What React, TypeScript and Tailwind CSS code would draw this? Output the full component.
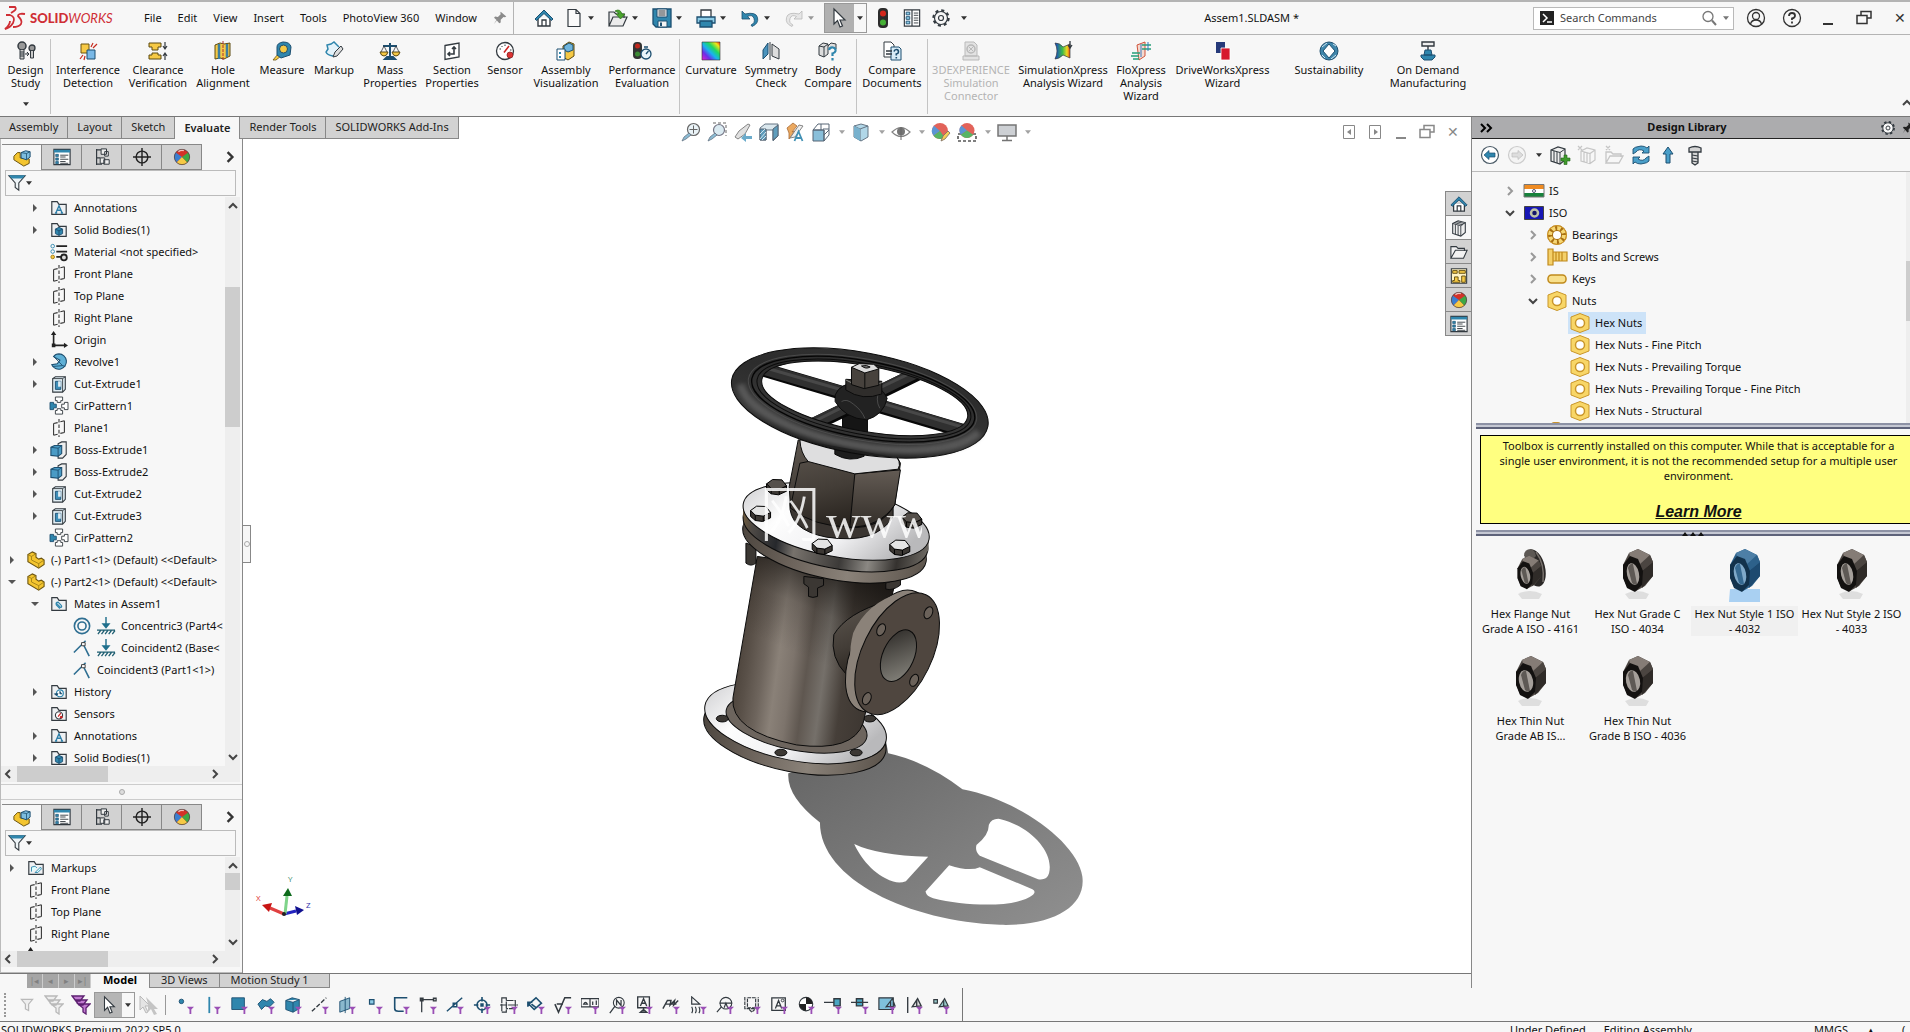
import { useState } from 'react'
import type { ReactNode } from 'react'
import { clsx } from 'clsx'

const K = '#333a40'
const B = '#2f86ad'
const L = '#8ccbe6'
const D = '#1d4f70'
const Y = '#f6c945'
const G = '#b9b9b9'

const folderBase = (
  <path d="M2 17V3h6l2 3h8v11z" fill="#eef0f2" stroke={K} strokeWidth="1.3" />
)

const icons: Record<string, ReactNode> = {
  home: (
    <>
      <path d="M4 10v8h12v-8" fill="#fff" stroke={K} strokeWidth="1.4" />
      <path d="M8 18v-6h4v6" fill="none" stroke={K} strokeWidth="1.3" />
      <path d="M1 11 10 2l9 9-1.5 1.5L10 5.500 2.500 12.500z" fill={B} stroke={D} strokeWidth="1" />
    </>
  ),
  page: (
    <path d="M4 1.500h8l4 4V18.500H4zM12 1.500v4h4" fill="#fafafa" stroke={K} strokeWidth="1.2" />
  ),
  open: (
    <>
      <path d="M1 18V4h5l2 2h8v4M1 18l4-9h14l-4 9z" fill="#ececec" stroke={K} strokeWidth="1.2" />
      <path d="M7 3q5-3 7 3h3l-4.500 5L8 6h3Q10 4 7 3z" fill="#4aa52e" stroke="#2b6e18" strokeWidth=".7" />
    </>
  ),
  save: (
    <>
      <path d="M1 1h18v18H4l-3-3z" fill={B} stroke={D} strokeWidth="1.3" />
      <path d="M5 1h10v8H5zM6 13h9v6H6z" fill="#f4f4f4" stroke={D} />
      <path d="M6.500 3h7M6.500 5h7M6.500 7h7" stroke={K} />
      <path d="M8 14.500h2V18H8z" fill={D} />
    </>
  ),
  print: (
    <>
      <path d="M5 9V2h10v7" fill="#fff" stroke={K} strokeWidth="1.3" />
      <path d="M1 9h18v6H1z" fill={L} stroke={D} strokeWidth="1.3" />
      <path d="M4 13h12v6H4z" fill={B} stroke={D} strokeWidth="1.3" />
    </>
  ),
  undo: (
    <path
      d="M2 3v8h8L7.500 8.500q5-2.500 6.500 2t-3 6.500l1 1.500q7-3 5.500-9T5 6z"
      fill={B}
      stroke={D}
      strokeWidth=".8"
    />
  ),
  redo: (
    <path
      d="M18 3v8h-8l2.500-2.500q-5-2.500-6.500 2t3 6.500l-1 1.500q-7-3-5.500-9T15 6z"
      fill="#e6e6e6"
      stroke={G}
      strokeWidth=".8"
    />
  ),
  pointer: (
    <path d="M5 1v15l3.500-3.500L11 19l2.500-1-2.500-6h5z" fill="#fff" stroke={K} strokeWidth="1.2" />
  ),
  pointerOff: (
    <>
      <path d="M1 1v14l3-3 3 6 2-1-3-6h5z" fill="#e4e4e4" stroke={G} />
      <path d="M7 2l12 12h-4l3 5-3 1-3-6-3 3V9z" fill="#c4c4c4" />
    </>
  ),
  traffic: (
    <>
      <rect x="5" y="0" width="10" height="20" rx="4" fill="#2c2c2c" />
      <circle cx="10" cy="5.500" r="3" fill="#d4271c" />
      <circle cx="10" cy="14.500" r="3" fill="#45b035" />
    </>
  ),
  list: (
    <>
      <path d="M1 1.500h18v17H1z" fill="#fff" stroke={K} strokeWidth="1.3" />
      <path d="M1 2h18v3H1z" fill={B} />
      <path d="M3 7h3v2.500H3zM3 11h3v2.500H3zM3 15h3v2.500H3z" fill={B} stroke={D} strokeWidth=".7" />
      <path d="M8 8h9M8 10h6M8 12.500h9M8 15h6M8 17h9" stroke={K} />
    </>
  ),
  options: (
    <>
      <path d="M1.500 1h17v18h-17zM10 1v18" fill="#fff" stroke={K} strokeWidth="1.3" />
      <path d="M3.500 3.500h4v3h-4zM3.500 8.500h4v3h-4zM3.500 13.500h4v3h-4z" fill={L} stroke={D} />
      <path d="M12 4.500h5M12 7h5M12 10h5M12 12.500h5M12 15.500h5" stroke={K} />
    </>
  ),
  gear: (
    <>
      <circle cx="10" cy="10" r="7.500" fill="none" stroke={K} strokeWidth="2.400" strokeDasharray="3 2.890" />
      <circle cx="10" cy="10" r="6.500" fill="#f7f7f7" stroke={K} strokeWidth="1.200" />
      <circle cx="10" cy="10" r="2.500" fill="none" stroke={K} strokeWidth="1.200" />
    </>
  ),
  pin: (
    <path d="M11 1l8 7-2 1-2-.5-4 4 0 4-2 1-3.500-4L1 19l4-6-3.500-3.500L3 8l4 .5 4-4-.5-2z" fill="currentColor" />
  ),
  study: (
    <>
      <circle cx="6" cy="5" r="4" fill="#999" stroke={K} strokeWidth="1.5" />
      <path d="M4 9v9h4V9M4 11h4M4 13h4M4 15h4" fill="#ccc" stroke={K} />
      <circle cx="16" cy="7" r="3" fill="#999" stroke={K} strokeWidth="1.3" />
      <path d="M14.500 10v7h3v-7M9 13h4l-2-2m2 2-2 2" fill="#ccc" stroke={K} />
    </>
  ),
  interference: (
    <>
      <path d="M3 3h8v9H3z" fill={Y} stroke="#6b5410" />
      <path d="M9 9h8v9H9z" fill="#79b8e6" stroke={D} />
      <path d="m13 6 2-4m0 5 4-4M5 14l-3 4m5-3-1 4" stroke="#c62c20" strokeWidth="1.2" />
    </>
  ),
  clearance: (
    <>
      <path d="M1 2h12v4h-3v3H4V6H1zM1 18h12v-4h-3v-2H4v2H1z" fill={Y} stroke="#5c4a10" />
      <path d="M17 1v6m-2-2 2 3 2-3M17 19v-6m-2 2 2-3 2 3" stroke={K} fill="none" strokeWidth="1.2" />
    </>
  ),
  hole: (
    <>
      <path d="M2 4l5-2 4 1 6-1v13l-6 3-4-1-5 1z" fill={Y} stroke="#5c4a10" />
      <path d="M6 3v15M14 3v13" stroke="#3c7f9f" strokeWidth="2.500" />
      <path d="M10 0v20" stroke="#a33" strokeDasharray="3 1" />
    </>
  ),
  measure: (
    <>
      <path d="M1 19l5-6 3 2-5 4z" fill={Y} stroke="#6b5410" strokeWidth=".8" />
      <path d="M5 6q0-4 6-5 7 0 8 5l-1 8-9 3-4-3z" fill={B} stroke={D} />
      <circle cx="11.500" cy="8" r="4" fill={Y} stroke={D} />
    </>
  ),
  markup: (
    <>
      <path d="M9 15q-6-1-7-4l2-3-1-4 4-1 3-2 3 3 2 2" fill="#e5f3fa" stroke={B} strokeWidth="1.5" />
      <path d="m9 16 2-5 6-6 2 3-6 7z" fill="#ddd" stroke={K} />
    </>
  ),
  mass: (
    <>
      <path d="M10 2v14M3 5h14M5 18h10l-2-2H7z" stroke={D} strokeWidth="2" fill={B} />
      <path d="M0 11h8q-1 4-4 4t-4-4zM12 11h8q-1 4-4 4t-4-4z" fill={Y} stroke="#5c4a10" />
      <path d="m4 5-3 6m3-6 3 6m9-6-3 6m3-6 3 6" stroke={K} strokeWidth=".8" />
    </>
  ),
  section: (
    <>
      <path d="M3 4.500 17 2v14L3 18.500z" fill="#fff" stroke={K} strokeWidth="1.3" />
      <path d="M6 13h6V7m-4 8-2-2 2-2M10 8l2-2 2 2" fill="none" stroke={K} strokeWidth="1.6" />
    </>
  ),
  sensor: (
    <>
      <circle cx="10" cy="10" r="8.500" fill="#fff" stroke={K} strokeWidth="1.300" />
      <path d="M9 11.500 14 5" stroke="#c22" strokeWidth="1.5" />
      <path d="M4.500 8h1.500M6.500 5l1 1M10 3.500v1.500M15 9h1.500" stroke={K} />
      <circle cx="15" cy="14" r="3" fill="#d33" stroke="#822" strokeWidth=".8" />
    </>
  ),
  visual: (
    <>
      <path d="m7 5 6-4 5 2v12l-6 4-5-3z" fill={Y} stroke="#5c4a10" />
      <path d="m8 5 5-3 4 2v5l-5 2-4-2z" fill="#6fb5dd" stroke={D} />
      <path d="M1 8h8v11H1z" fill="#fff" stroke={D} />
      <path d="M3 11h2v2H3zM3 15h2v2H3z" fill={B} />
    </>
  ),
  perf: (
    <>
      <rect x="1" y="1" width="9" height="17" rx="4" fill="#333" />
      <circle cx="5.500" cy="5" r="2.500" fill="#c0281d" />
      <circle cx="5.500" cy="13" r="2.500" fill="#3d8a35" />
      <circle cx="14" cy="13" r="5" fill="#e9f4fa" stroke={D} strokeWidth="1.3" />
      <path d="M14 13l2.500-3M12 6h4" stroke={D} strokeWidth="1.3" />
    </>
  ),
  curvature: <path d="M1 1h18v18H1z" fill="url(#rainbow)" stroke="#333" strokeWidth=".6" />,
  symmetry: (
    <>
      <path d="M2 18V9l5-7v11z" fill="#4b94bd" stroke={D} />
      <path d="M11 15V3l7 5v10z" fill="#ddd" stroke={K} />
      <path d="M9 1v18" stroke={K} />
    </>
  ),
  bodycmp: (
    <>
      <path d="M1 5l4-3 5 1v10l-4 3-5-2zM10 5l3-3 5 1v5" fill="#ddd" stroke={K} />
      <path d="m1 5 5 1 4-3M6 6v10" stroke={K} />
      <path d="M11 9q1-3 4-2.500t2.500 3.500Q17 12 14.500 12.500V15M14.500 17v2.500" stroke={B} strokeWidth="2.200" />
    </>
  ),
  doccmp: (
    <>
      <path d="M2 1h7l3 3v12H2z" fill="#fff" stroke={K} />
      <path d="M9 6h8l2 2v11H9z" fill="#d8ecf7" stroke={D} />
      <path d="M12 10.500q.5-2 2.500-2t2 2.500q0 1.500-2.200 2V14.500M14.300 16v1.500" stroke={D} strokeWidth="1.600" />
      <path d="M4 10h6M4 13h6" stroke={K} strokeWidth="1.5" />
    </>
  ),
  exp: (
    <>
      <path d="M2 15h16v4H2zM4 1h9l3 3v11H4z" fill="#e2e2e2" stroke={G} />
      <circle cx="10" cy="8" r="4" fill="none" stroke={G} strokeWidth="1.500" />
      <path d="m8 10 5-5M8 6l4 4" stroke={G} />
    </>
  ),
  sim: (
    <>
      <path d="M2 2q5 0 8 4l7-3v14l-7-3q-4 4-8 4 2-4 2-8T2 2z" fill="url(#rainbow2)" stroke={K} strokeWidth=".7" />
      <path d="M17 0v6m-2-2 2 3 2-3" fill="none" stroke={K} strokeWidth="1.3" />
    </>
  ),
  flo: (
    <>
      <path d="M6 4l8-3v14l-6 4z" fill="#f4d9cf" stroke="#d0523a" />
      <path d="M1 12h8M0 15h8M2 18h6M11 4h9M11 8h9" stroke="#28a07a" strokeWidth="1.300" />
      <path d="M10 3v13M17 1v9" stroke="#3779c0" />
    </>
  ),
  drive: (
    <>
      <path d="M3 1h9v11H3z" fill="#263a7a" />
      <path d="M8 7h9v12H8z" fill="#d6182e" stroke="#fff" strokeWidth=".8" />
    </>
  ),
  sustain: (
    <>
      <circle cx="10" cy="10" r="9" fill="#3f86ab" stroke={D} />
      <path d="m10 3 6 7-6 7-6-7z" fill="#fff" stroke={D} />
      <path d="M3 6 8 2M17 14l-5 4M17 5l-3-2M3 14l3 3" stroke="#cfe6f2" />
    </>
  ),
  demand: (
    <>
      <path d="M4 1h12v4H4zM10 5v4" fill="#eee" stroke={K} strokeWidth="1.4" />
      <path d="M3 14h14v2l-3 3H6l-3-3zM7 9h6l1 5H6z" fill={B} stroke={D} />
    </>
  ),
  zoomfit: (
    <>
      <circle cx="12.500" cy="7.500" r="6" fill="#e8f2f7" stroke="#555" strokeWidth="1.200" />
      <path d="M12.500 3.500v8M8.500 7.500h8" stroke="#555" />
      <path d="m1 19 2-4 5-4 2 2-5 4z" fill="#7fb4cf" stroke="#567" strokeWidth=".8" />
    </>
  ),
  zoomarea: (
    <>
      <path d="M6 1h13v13" fill="none" stroke="#555" strokeDasharray="3 2" />
      <circle cx="12" cy="8" r="5.500" fill="#d6e8f0" stroke="#667" strokeWidth="1.200" />
      <path d="m1 19 2-4 5-4 2 2-5 4z" fill="#7fb4cf" stroke="#567" strokeWidth=".8" />
    </>
  ),
  prev: (
    <>
      <path d="m2 15 4-6 9-7 2 1-5 9-7 5z" fill="#ddd" stroke="#777" />
      <path d="M19 14h-6v-3l-5 5 5 4v-3h6z" fill="#5ba3c6" />
    </>
  ),
  cutview: (
    <>
      <path d="M1 6l5-4h13v12l-5 5V8H7v10H1z" fill="#d7e5ec" stroke="#567" />
      <path d="M1 7h6v11H1zM14 7l5-4v11l-5 4z" fill="#4d93b5" stroke="#456" />
      <path d="m1 12 5-5M1 17l6-7M3 18l4-4" stroke="#cfe3ee" />
    </>
  ),
  annot: (
    <>
      <path d="M2 6 8 1l4 3-5 6 3-1-6 8V11z" fill="#e9a04f" stroke="#a05a20" strokeWidth=".8" />
      <path d="m5 16 9-13 4 1-8 11z" fill="#eee" stroke="#777" />
      <path d="m9.500 19 4-9.500 4 9.500M11 16h5" stroke={B} strokeWidth="1.800" />
    </>
  ),
  viewcube: (
    <>
      <path d="M2 8h11v11H2z" fill="#7db9d6" stroke="#456" />
      <path d="m2 8 5-6h11v11l-5 6V8z" fill="none" stroke="#456" />
      <path d="M10 2v6M18 7h-6M13 13l5-5" stroke="#456" />
    </>
  ),
  cube: (
    <>
      <path d="m3 4 7-2 7 2v11l-7 4-7-4z" fill="#a9d3e6" stroke="#567" />
      <path d="m3 4 6 3v12M9 7l8-3" fill="none" stroke="#567" />
      <path d="M9 7v12l-6-4V4z" fill="#6aa9c8" />
    </>
  ),
  eye: (
    <>
      <path d="M1 10q9-9 18 0-9 9-18 0z" fill="#fff" stroke="#777" strokeWidth="1.200" />
      <circle cx="10" cy="9.500" r="4" fill="#666" />
      <path d="M10 5v13" stroke="#555" />
    </>
  ),
  ball: (
    <>
      <circle cx="10" cy="10" r="8.500" fill="#d33128" />
      <path d="M10 10 3 5a8.500 8.500 0 0 0 1 11z" fill="#3b7fd0" />
      <path d="M10 10 4 16a8.500 8.500 0 0 0 12 0z" fill={Y} />
      <path d="m10 10 6 6a8.500 8.500 0 0 0 1-11z" fill="#3da744" />
      <circle cx="10" cy="10" r="8.500" fill="none" stroke="#444" strokeWidth=".8" />
      <path d="M6 4q3-2 6-1" stroke="#fff" strokeWidth="1.500" fill="none" opacity=".7" />
    </>
  ),
  ballpen: (
    <>
      <circle cx="9" cy="9" r="8" fill="#df5349" />
      <path d="M9 9 3 3.700a8 8 0 0 0-.5 10z" fill="#4a8ad0" />
      <path d="M9 9 2.500 13.700a8 8 0 0 0 11 1.800z" fill="#45ad55" />
      <path d="m10 19 2-5 5-5 2 2-5 6z" fill={Y} stroke="#765" strokeWidth=".9" />
    </>
  ),
  scene: (
    <>
      <path d="M1 12h18v7H1z" fill="#fff" stroke="#444" strokeDasharray="3 2" strokeWidth="1.600" />
      <circle cx="10" cy="8.500" r="7.500" fill="#df5349" />
      <path d="M10 8.500 4.500 3.500a7.500 7.500 0 0 0-.7 9.200z" fill="#4a8ad0" />
      <path d="M10 8.500 3.800 12.700a7.500 7.500 0 0 0 12.400 0z" fill="#45ad55" />
    </>
  ),
  monitor: (
    <path d="M1 3h18v11H1zM10 14v4M5 18.500h10" fill="#c8ccd0" stroke="#666" strokeWidth="1.500" />
  ),
  part: (
    <>
      <path d="M1 7V4l5-3 4 2v4l3 2 3-1 3 2v5l-6 4L1 12z" fill="#f4c52f" stroke="#6b5410" strokeWidth="1.200" />
      <path d="m1 4 4 2 5-3M5 6v4l8 4 6-4M13 14v5" stroke="#9a7a14" strokeWidth=".9" />
    </>
  ),
  asm: (
    <>
      <path d="M1 8l4-4h3v6l10 1v5l-6 3L1 12z" fill="#f4c52f" stroke="#6b5410" strokeWidth="1.100" />
      <path d="m9 4 5-2 5 1v6l-4 3-6-2z" fill="#7dbde0" stroke={D} strokeWidth="1.100" />
      <path d="m9 4 6 1 4-2M15 5v7" stroke={D} strokeWidth=".9" />
    </>
  ),
  config: (
    <>
      <path d="M4 1v18M4 2h6M4 11h4M4 18h6" fill="none" stroke={K} strokeWidth="1.300" />
      <path d="M9 1h6v6H9zM13 4h4v5h-4zM8 11h5v6H8zM12 13h6v5h-6z" fill="#eee" stroke={K} strokeWidth="1.100" />
    </>
  ),
  target: (
    <>
      <circle cx="10" cy="10" r="6.500" fill="none" stroke="#222" strokeWidth="1.600" />
      <path d="M10 0v20M0 10h20" stroke="#222" strokeWidth="1.600" />
    </>
  ),
  funnel: (
    <>
      <path d="M1 2h18l-7 8v8l-4-3v-5z" fill="#eef4f7" stroke={K} strokeWidth="1.200" />
      <path d="M1 1.500h18L16 5H4z" fill={B} />
    </>
  ),
  folderA: (
    <>
      {folderBase}
      <path d="m6.500 15.500 3.500-8 3.500 8M8 12.500h4M5.500 15.500h2.500M12 15.500h2.500" stroke="#2f7fa8" strokeWidth="1.500" />
    </>
  ),
  folderBody: (
    <>
      {folderBase}
      <path d="m6 9 4-2 4 2v5l-4 2-4-2z" fill={B} stroke={D} />
      <path d="m6 9 4 2 4-2M10 11v5" stroke={D} fill="none" />
    </>
  ),
  folderMate: (
    <>
      {folderBase}
      <path d="m7 9 5 5q2-1 0-3L9 8q-3 0-2 3l4 4" fill="none" stroke={B} strokeWidth="1.300" />
    </>
  ),
  folderHist: (
    <>
      {folderBase}
      <circle cx="11" cy="11.500" r="3.800" fill="#fff" stroke={B} strokeWidth="1.300" />
      <path d="M11 9v3h2.500M5 12h4L7 14z" stroke={D} fill={D} />
    </>
  ),
  folderSensor: (
    <>
      {folderBase}
      <circle cx="10" cy="11.500" r="4" fill="#fff" stroke={K} strokeWidth="1.200" />
      <path d="m9 13 3-4" stroke="#c22" strokeWidth="1.300" />
      <circle cx="12.500" cy="13.500" r="1.500" fill="#c22" />
    </>
  ),
  folderMark: (
    <>
      {folderBase}
      <path d="M5 14V9l4-1 2 2M9 15l6-6 1 2-4 4z" fill="#dff" stroke={B} />
    </>
  ),
  material: (
    <>
      <circle cx="3" cy="3.500" r="2" fill="none" stroke={B} />
      <circle cx="3" cy="9.500" r="2" fill="none" stroke={B} />
      <circle cx="3" cy="15.500" r="2" fill={Y} stroke="#a07a10" />
      <path d="M7 3.500h12M7 9.500h12M7 15.500h6" stroke="#222" strokeWidth="2" />
      <circle cx="15.500" cy="16" r="3.200" fill="#ddd" stroke="#222" strokeWidth="2" />
    </>
  ),
  plane: (
    <>
      <path d="M4 5v13M16 2v13M4 5l4.500-1M11.500 3 16 2M4 18l4.500-1M11.500 16l4.500-1" stroke="#333" strokeWidth="1.200" />
      <path d="M10 0v20" stroke="#333" strokeWidth="1.200" strokeDasharray="4 2" />
    </>
  ),
  origin: (
    <>
      <path d="M4 3v13h13" stroke="#222" strokeWidth="1.800" />
      <path d="M4 0l3 4.500H1zM20 16l-4.500-3v6zM2 14h4v4H2z" fill="#222" />
    </>
  ),
  revolve: (
    <>
      <path d="M10 1a8.500 8.500 0 1 1-8 12l6-1 3-4-7-4q2-3 6-3z" fill="#5fb0d6" stroke={D} strokeWidth="1.200" />
      <path d="m4 4 10 10-11 1M14 14l3 1" stroke={D} fill="none" />
    </>
  ),
  cut: (
    <>
      <path d="m3 4 3-2h11v14l-3 3H3z" fill="#e2eef4" stroke={K} strokeWidth="1.200" />
      <path d="M3 4h11v15M14 4l3-2" fill="none" stroke={K} />
      <path d="M6 7h6v9H6z" fill="#3f8fb8" stroke={D} />
      <path d="M9 7h3v6H9z" fill="#e2eef4" />
    </>
  ),
  cir: (
    <>
      <path d="M0 6h4v2h3v4H4v2H0z" fill={B} stroke={D} />
      <path d="M6 0h8v4h-2v2H8V4H6zM6 19h8v-4h-2v-2H8v2H6zM20 6h-4v2h-3v4h3v2h4z" fill="#fff" stroke={K} />
    </>
  ),
  boss: (
    <>
      <path d="m9 3 4-2h5v14l-4 4H9z" fill="#eee" stroke={K} strokeWidth="1.200" />
      <path d="m1 7 4-2h8v9l-4 3-8-1z" fill="#4a9bc5" stroke={D} strokeWidth="1.200" />
      <path d="m1 7 8 1 4-3M9 8v9" fill="none" stroke={D} />
    </>
  ),
  concentric: (
    <>
      <circle cx="10" cy="10" r="8.500" fill="none" stroke="#2f6f92" strokeWidth="1.800" />
      <circle cx="10" cy="10" r="4.500" fill="none" stroke="#2f6f92" strokeWidth="1.800" />
    </>
  ),
  coincident: (
    <>
      <path d="M1 15 14 2M11 5l7 14" stroke="#2f6f92" strokeWidth="1.800" />
      <path d="M9.500 4h4v3.500h-4z" fill="#fff" stroke="#333" />
    </>
  ),
  ground: (
    <>
      <path d="M10 0v8" stroke="#1f6f8c" strokeWidth="1.600" />
      <path d="M5 7h10l-5 6z" fill="#1f6f8c" />
      <path d="M0 14.500h20M4 15l-3 4M8 15l-3 4M12 15l-3 4M16 15l-3 4M20 15l-3 4" stroke="#1f5f72" strokeWidth="1.400" />
    </>
  ),
  back: (
    <>
      <circle cx="10" cy="10" r="8.500" fill="#fff" stroke="#4a5a66" strokeWidth="1.200" />
      <path d="M4 10l5-4.500V8h6v4H9v2.500z" fill={B} stroke={D} strokeWidth=".7" />
    </>
  ),
  fwd: (
    <>
      <circle cx="10" cy="10" r="8.500" fill="#f4f4f4" stroke="#ccc" strokeWidth="1.200" />
      <path d="m16 10-5-4.500V8H5v4h6v2.500z" fill="#ddd" stroke="#bbb" strokeWidth=".7" />
    </>
  ),
  books: (
    <>
      <path d="m3 5 6-3 8 2v11l-5 4-9-3z" fill="#eee" stroke={K} strokeWidth="1.200" />
      <path d="m3 5 9 2.500L17 4M12 7.500V19M6 6v11M9 7v11M5 4l9 2.500M7 3l9 2" fill="none" stroke={K} />
    </>
  ),
  booksAdd: (
    <>
      <path d="m1 5 7-3 7 2v11l-5 4-9-3z" fill="#eee" stroke={K} strokeWidth="1.200" />
      <path d="m1 5 9 2.500L15 4M10 7.500V19M4 6v11M7 7v11" fill="none" stroke={K} />
      <path d="M14 10h3v3h3v3h-3v3.500h-3V16h-3v-3h3z" fill="#3f9a2c" stroke="#23611a" strokeWidth=".6" />
    </>
  ),
  booksOff: (
    <path d="m4 6 6-3 8 2v10l-5 3.500L4 16zM4 6l9 2.500L18 5M13 8.500v10M7 7v10M10 8v10M1 1l4 4M5 1 1 5" fill="none" stroke="#c6c6c6" strokeWidth="1.200" />
  ),
  folderOff: (
    <path d="M2 18V7h5l2 2h8v3M2 18l4-7h13l-4 7zM2 1l4 4M6 1 2 5" fill="none" stroke="#c6c6c6" strokeWidth="1.300" />
  ),
  refresh: (
    <path
      d="M2 9V4q1-2 8-3 4 0 6 2l2-2v7h-7l2-2q-5-3-8 1zM18 11v5q-1 2-8 3-4 0-6-2l-2 2v-7h7l-2 2q5 3 8-1z"
      fill="#4a9fc9"
      stroke={D}
      strokeWidth=".9"
    />
  ),
  up: <path d="M10 2 5 9h3v9h4V9h3z" fill="#4a9fc9" stroke={D} />,
  bolt: (
    <>
      <path d="M4 3q6-3 12 0v4H4zM7 7h6v11l-3 2-3-2z" fill="#d5d5d5" stroke={K} strokeWidth="1.300" />
      <path d="m7 10 6 1M7 13l6 1M7 16l6 1" stroke={K} />
    </>
  ),
  folder: (
    <path d="M1 17V4h6l2 2h7v3M1 17l5-9h13l-4 9z" fill="#f2f2f2" stroke={K} strokeWidth="1.200" />
  ),
  palette: (
    <>
      <path d="M1.500 2h17v16h-17z" fill="#fff3c4" stroke={K} strokeWidth="1.200" />
      <path d="M3 4h5v3H3zM10 4h7v3h-7zM3 15h2v-4h4v4h2v2H3zM13 10h4v7h-4z" fill={Y} stroke="#5c4a10" />
    </>
  ),
  india: (
    <>
      <path d="M0 3h20v5H0z" fill="#ef8b22" />
      <path d="M0 8h20v4H0z" fill="#fff" />
      <path d="M0 12h20v4H0z" fill="#17823b" />
      <path d="M0 3.500h20v12.500H0z" fill="none" stroke="#777" />
      <circle cx="10" cy="10" r="1.500" fill="none" stroke="#557" />
    </>
  ),
  iso: (
    <>
      <path d="M.5 3.500h19v13H.5z" fill="#1717b5" stroke="#444" />
      <circle cx="10.500" cy="10" r="3.500" fill="#15156a" stroke="#bfc3a8" strokeWidth="2.500" />
    </>
  ),
  bearing: (
    <>
      <circle cx="10" cy="10" r="7" fill="#fff" stroke="#a86f12" strokeWidth="6" />
      <circle cx="10" cy="10" r="7" fill="none" stroke="#f6d774" strokeWidth="4" strokeDasharray="3.500 2" />
      <circle cx="10" cy="10" r="9.400" fill="none" stroke="#d49b2a" />
    </>
  ),
  screw: (
    <path d="M1 2h5v16H1zM6 5h14v9H6zM9 5v9M12 5v9M15 5v9" fill="#f4d06a" stroke="#c08a1c" strokeWidth="1.200" />
  ),
  key: <rect x="1" y="6" width="18" height="8" rx="3.500" fill="#f8e08c" stroke="#c08a1c" strokeWidth="1.500" />,
  nut: (
    <>
      <path d="m10 .5 9 3.500v12l-9 3.500L1 16V4z" fill="#f8d667" stroke="#c9962a" />
      <circle cx="10" cy="10" r="4.500" fill="#fff" stroke="#c9962a" strokeWidth="1.500" />
    </>
  ),
}

function Icon({ name, className = 'size-5' }: { name: string; className?: string }) {
  return (
    <svg viewBox="0 0 20 20" fill="none" aria-hidden="true" className={clsx('shrink-0 overflow-visible', className)}>
      {icons[name]}
    </svg>
  )
}

function Caret({ className = 'text-[#333]' }: { className?: string }) {
  return (
    <svg viewBox="0 0 8 5" aria-hidden="true" className={clsx('h-1 w-1.5 shrink-0', className)}>
      <path d="M0 0h8L4 5z" fill="currentColor" />
    </svg>
  )
}

function Chevron({ dir, className = 'size-2.5 text-[#444]' }: { dir: 'up' | 'down' | 'left' | 'right'; className?: string }) {
  const d = {
    up: 'M1 7l4-4 4 4',
    down: 'M1 3l4 4 4-4',
    left: 'M7 1 3 5l4 4',
    right: 'M3 1l4 4-4 4',
  }[dir]
  return (
    <svg viewBox="0 0 10 10" aria-hidden="true" className={clsx('shrink-0', className)}>
      <path d={d} fill="none" stroke="currentColor" strokeWidth="2" />
    </svg>
  )
}

function Restore() {
  return (
    <svg viewBox="0 0 16 16" className="size-4" aria-hidden="true">
      <path d="M5 5V1.500h10V8h-4M1 5.500h10v8H1z" fill="none" stroke="currentColor" strokeWidth="1.500" />
    </svg>
  )
}

const menus = ['File', 'Edit', 'View', 'Insert', 'Tools', 'PhotoView 360', 'Window']

const quick = [
  { icon: 'home', label: 'Home', width: 'w-[30px]', caret: false },
  { icon: 'page', label: 'New', width: 'w-[44px]', caret: true },
  { icon: 'open', label: 'Open', width: 'w-[44px]', caret: true },
  { icon: 'save', label: 'Save', width: 'w-[44px]', caret: true },
  { icon: 'print', label: 'Print', width: 'w-[44px]', caret: true },
  { icon: 'undo', label: 'Undo', width: 'w-[44px]', caret: true },
  { icon: 'redo', label: 'Redo', width: 'w-[44px]', caret: true, off: true },
]

function TitleBar() {
  return (
    <header className="flex h-[35px] shrink-0 items-center border-t-2 border-b border-[#b4b4b4] bg-[#f7f7f7]">
      <div className="flex w-[136px] shrink-0 items-center gap-1 pl-1 text-[#cf2e35]">
        <svg viewBox="0 0 22 24" className="h-6 w-[22px]" aria-hidden="true">
          <path
            d="M5 1h6q2 2-1 4L7 7M2 9h4q6 2 3 8-3 5-8 6 5-4 5-8M21 8q-7-1-7 2 5 5 3 8-2 3-8 3"
            fill="none"
            stroke="currentColor"
            strokeWidth="1.800"
          />
        </svg>
        <span className="font-['Lato',sans-serif] text-[13px] leading-4">
          <b className="font-black">SOLID</b>
          <i>WORKS</i>
        </span>
      </div>
      <nav className="flex h-full shrink-0 items-center">
        {menus.map((menu) => (
          <button key={menu} type="button" className="px-2">
            {menu}
          </button>
        ))}
      </nav>
      <button type="button" aria-label="Pin menu" className="ml-2 text-[#8b8b8b]">
        <Icon name="pin" className="size-3.5" />
      </button>
      <div className="ml-1.5 flex h-full shrink-0 items-center border-l border-[#b4b4b4] pl-4">
        {quick.map((item) => (
          <button
            key={item.label}
            type="button"
            aria-label={item.label}
            className={clsx('flex shrink-0 items-center justify-between pr-2.5 pl-1', item.width)}
          >
            <Icon name={item.icon} />
            {item.caret && <Caret className={item.off ? 'text-[#999]' : 'text-[#333]'} />}
          </button>
        ))}
        <button type="button" aria-label="Select" className="flex h-[30px] border border-[#999]">
          <span className="flex h-full w-[29px] items-center justify-center bg-[#b0b0b0]">
            <Icon name="pointer" />
          </span>
          <span className="flex h-full w-3 items-center justify-center">
            <Caret />
          </span>
        </button>
        <div className="ml-1.5 flex items-center gap-2.5">
          <button type="button" aria-label="Rebuild">
            <Icon name="traffic" />
          </button>
          <button type="button" aria-label="File properties">
            <Icon name="options" className="size-[18px]" />
          </button>
          <button type="button" aria-label="Options" className="flex items-center gap-2.5">
            <Icon name="gear" />
            <Caret />
          </button>
        </div>
      </div>
      <p className="ml-auto pr-[234px]">Assem1.SLDASM *</p>
      <div className="flex h-[23px] w-[201px] shrink-0 items-center border border-[#b9b9b9] bg-white pl-1.5">
        <svg viewBox="0 0 14 14" className="size-3.5" aria-hidden="true">
          <path d="M0 0h14v14H0z" fill="#222" />
          <path d="m3 3 4 4-4 4M7 11h5" fill="none" stroke="#fff" strokeWidth="1.500" />
        </svg>
        <input
          aria-label="Search Commands"
          placeholder="Search Commands"
          className="w-0 flex-1 bg-transparent pl-1.5 outline-none placeholder:text-[#444]"
        />
        <svg viewBox="0 0 16 16" className="mr-1.5 size-4 text-[#777]" aria-hidden="true">
          <path d="M11 10.500 15 15" stroke="currentColor" strokeWidth="2" />
          <circle cx="7" cy="6.500" r="5" fill="none" stroke="currentColor" strokeWidth="1.300" />
        </svg>
        <Caret className="mr-1 text-[#777]" />
      </div>
      <div className="flex shrink-0 items-center gap-4 pl-3 text-[#333]">
        <button type="button" aria-label="Account">
          <svg viewBox="0 0 20 20" className="size-5" fill="none" stroke="currentColor" aria-hidden="true">
            <circle cx="10" cy="10" r="8.500" strokeWidth="1.300" />
            <circle cx="10" cy="8" r="3.500" strokeWidth="1.300" />
            <path d="M4.500 16q1-4 5.500-4t5.500 4" strokeWidth="1.300" />
          </svg>
        </button>
        <button type="button" aria-label="Help">
          <svg viewBox="0 0 20 20" className="size-5" fill="none" stroke="currentColor" aria-hidden="true">
            <circle cx="10" cy="10" r="8.500" strokeWidth="1.300" />
            <path d="M7 8q0-3 3-3t3 2.500-3 3V12M10 13.500v2" strokeWidth="1.800" />
          </svg>
        </button>
        <button type="button" aria-label="Minimize" className="flex h-4 w-5 items-end justify-center pb-px">
          <span className="h-0.5 w-2.5 bg-[#333]" />
        </button>
        <button type="button" aria-label="Restore" className="flex w-5 justify-center">
          <Restore />
        </button>
        <button type="button" aria-label="Close" className="flex w-5 justify-center text-[14px] leading-4">
          ✕
        </button>
      </div>
    </header>
  )
}

type Tool = { icon: string; label: string; width: string; off?: boolean; caret?: boolean }

const ribbon: Tool[][] = [
  [{ icon: 'study', label: 'Design Study', width: 'w-[49px]', caret: true }],
  [
    { icon: 'interference', label: 'Interference Detection', width: 'w-[74px]' },
    { icon: 'clearance', label: 'Clearance Verification', width: 'w-[66px]' },
    { icon: 'hole', label: 'Hole Alignment', width: 'w-[64px]' },
    { icon: 'measure', label: 'Measure', width: 'w-[54px]' },
    { icon: 'markup', label: 'Markup', width: 'w-[50px]' },
    { icon: 'mass', label: 'Mass Properties', width: 'w-[62px]' },
    { icon: 'section', label: 'Section Properties', width: 'w-[62px]' },
    { icon: 'sensor', label: 'Sensor', width: 'w-[44px]' },
    { icon: 'visual', label: 'Assembly Visualization', width: 'w-[78px]' },
    { icon: 'perf', label: 'Performance Evaluation', width: 'w-[74px]' },
  ],
  [
    { icon: 'curvature', label: 'Curvature', width: 'w-[62px]' },
    { icon: 'symmetry', label: 'Symmetry Check', width: 'w-[58px]' },
    { icon: 'bodycmp', label: 'Body Compare', width: 'w-[56px]' },
  ],
  [{ icon: 'doccmp', label: 'Compare Documents', width: 'w-[70px]' }],
  [
    { icon: 'exp', label: '3DEXPERIENCE Simulation Connector', width: 'w-[86px]', off: true },
    { icon: 'sim', label: 'SimulationXpress Analysis Wizard', width: 'w-[98px]' },
    { icon: 'flo', label: 'FloXpress Analysis Wizard', width: 'w-[58px]' },
    { icon: 'drive', label: 'DriveWorksXpress Wizard', width: 'w-[105px]' },
    { icon: 'sustain', label: 'Sustainability', width: 'w-[108px]' },
    { icon: 'demand', label: 'On Demand Manufacturing', width: 'w-[90px]' },
  ],
]

function Ribbon() {
  return (
    <div className="flex h-[82px] shrink-0 border-b border-[#777] bg-[#f7f7f7] pt-1 pb-0.5 pl-px">
      {ribbon.map((group, index) => (
        <div key={index} className="flex border-r border-[#c4c4c4] last-of-type:border-r-0">
          {group.map((tool) => (
            <button
              key={tool.label}
              type="button"
              disabled={tool.off}
              className={clsx(
                'flex shrink-0 flex-col items-center pt-0.5 text-center leading-[13px]',
                tool.width,
                tool.off && 'text-[#b4b4b4]',
              )}
            >
              <Icon name={tool.icon} className="mb-0.5 size-5" />
              <span className="w-min min-w-[44px]">
                {tool.label === 'SimulationXpress Analysis Wizard' ? (
                  <>
                    SimulationXpress <span className="whitespace-nowrap">Analysis Wizard</span>
                  </>
                ) : tool.label === 'On Demand Manufacturing' ? (
                  <>
                    <span className="whitespace-nowrap">On Demand</span> Manufacturing
                  </>
                ) : (
                  tool.label
                )}
              </span>
              {tool.caret && <Caret className="mt-auto mb-2 text-[#333]" />}
            </button>
          ))}
        </div>
      ))}
      <button type="button" aria-label="Collapse ribbon" className="mt-auto -mr-0.5 mb-1.5 ml-auto">
        <Chevron dir="up" />
      </button>
    </div>
  )
}

const commandTabs = ['Assembly', 'Layout', 'Sketch', 'Evaluate', 'Render Tools', 'SOLIDWORKS Add-Ins']

function CommandTabs() {
  const [active, setActive] = useState('Evaluate')
  return (
    <div role="tablist" className="flex h-[22px] shrink-0 bg-white">
      {commandTabs.map((tab) => (
        <button
          key={tab}
          type="button"
          role="tab"
          aria-selected={tab === active}
          onClick={() => setActive(tab)}
          className={clsx(
            'border-r border-[#888] px-[9px] text-[#222]',
            tab === active ? 'bg-[#f7f7f7] font-semibold' : 'border-b bg-[#d2d2d2]',
          )}
        >
          {tab}
        </button>
      ))}
    </div>
  )
}

type Row = {
  label: string
  icons: string[]
  level: 0 | 1 | 2
  arrow?: 'right' | 'down'
}

const tree: Row[] = [
  { label: 'Annotations', icons: ['folderA'], level: 1, arrow: 'right' },
  { label: 'Solid Bodies(1)', icons: ['folderBody'], level: 1, arrow: 'right' },
  { label: 'Material <not specified>', icons: ['material'], level: 1 },
  { label: 'Front Plane', icons: ['plane'], level: 1 },
  { label: 'Top Plane', icons: ['plane'], level: 1 },
  { label: 'Right Plane', icons: ['plane'], level: 1 },
  { label: 'Origin', icons: ['origin'], level: 1 },
  { label: 'Revolve1', icons: ['revolve'], level: 1, arrow: 'right' },
  { label: 'Cut-Extrude1', icons: ['cut'], level: 1, arrow: 'right' },
  { label: 'CirPattern1', icons: ['cir'], level: 1 },
  { label: 'Plane1', icons: ['plane'], level: 1 },
  { label: 'Boss-Extrude1', icons: ['boss'], level: 1, arrow: 'right' },
  { label: 'Boss-Extrude2', icons: ['boss'], level: 1, arrow: 'right' },
  { label: 'Cut-Extrude2', icons: ['cut'], level: 1, arrow: 'right' },
  { label: 'Cut-Extrude3', icons: ['cut'], level: 1, arrow: 'right' },
  { label: 'CirPattern2', icons: ['cir'], level: 1 },
  { label: '(-) Part1<1> (Default) <<Default>', icons: ['part'], level: 0, arrow: 'right' },
  { label: '(-) Part2<1> (Default) <<Default>', icons: ['part'], level: 0, arrow: 'down' },
  { label: 'Mates in Assem1', icons: ['folderMate'], level: 1, arrow: 'down' },
  { label: 'Concentric3 (Part4<', icons: ['concentric', 'ground'], level: 2 },
  { label: 'Coincident2 (Base<', icons: ['coincident', 'ground'], level: 2 },
  { label: 'Coincident3 (Part1<1>)', icons: ['coincident'], level: 2 },
  { label: 'History', icons: ['folderHist'], level: 1, arrow: 'right' },
  { label: 'Sensors', icons: ['folderSensor'], level: 1 },
  { label: 'Annotations', icons: ['folderA'], level: 1, arrow: 'right' },
  { label: 'Solid Bodies(1)', icons: ['folderBody'], level: 1, arrow: 'right' },
]

const lowerTree: Row[] = [
  { label: 'Markups', icons: ['folderMark'], level: 0, arrow: 'right' },
  { label: 'Front Plane', icons: ['plane'], level: 0 },
  { label: 'Top Plane', icons: ['plane'], level: 0 },
  { label: 'Right Plane', icons: ['plane'], level: 0 },
  { label: '', icons: ['origin'], level: 0 },
]

const indent = ['pl-[7px]', 'pl-[30px]', 'pl-[53px]']

function TreeRow({ row }: { row: Row }) {
  return (
    <li className={clsx('flex h-[22px] items-center whitespace-nowrap', indent[row.level])}>
      <span className="flex w-[19px] shrink-0 text-[#555]">
        {row.arrow && (
          <svg viewBox="0 0 8 8" className="size-2" aria-hidden="true">
            <path d={row.arrow === 'right' ? 'M2 0v8l4-4z' : 'M0 2h8L4 6z'} fill="currentColor" />
          </svg>
        )}
      </span>
      <span className="flex gap-1.5 pr-1.5">
        {row.icons.map((icon) => (
          <Icon key={icon} name={icon} className="size-[18px]" />
        ))}
      </span>
      {row.label}
    </li>
  )
}

const managerTabs = ['asm', 'list', 'config', 'target', 'ball']

function ManagerPane({ rows, className, thumb }: { rows: Row[]; className: string; thumb: string }) {
  const [active, setActive] = useState('asm')
  const [filter, setFilter] = useState('')
  return (
    <section className={clsx('flex min-h-0 flex-col', className)}>
      <div role="tablist" className="flex h-[26px] shrink-0 pl-px">
        {managerTabs.map((tab) => (
          <button
            key={tab}
            type="button"
            role="tab"
            aria-label={tab}
            aria-selected={tab === active}
            onClick={() => setActive(tab)}
            className={clsx(
              'flex w-10 items-center justify-center border-t border-r border-[#888]',
              tab === active ? 'bg-[#f7f7f7]' : 'border-b bg-[#d2d2d2]',
            )}
          >
            <Icon name={tab} className="size-[18px]" />
          </button>
        ))}
        <button type="button" aria-label="More tabs" className="mr-1.5 ml-auto">
          <Chevron dir="right" className="size-3 text-[#333]" />
        </button>
      </div>
      <label className="mr-1.5 ml-1 flex h-[26px] shrink-0 items-center border border-[#bbb] pl-0.5">
        <Icon name="funnel" className="size-[18px]" />
        <Caret />
        <input
          aria-label="Filter tree"
          value={filter}
          onChange={(event) => setFilter(event.target.value)}
          className="w-0 flex-1 bg-transparent outline-none"
        />
      </label>
      <div className="flex min-h-0 flex-1 pt-px">
        <ul className="min-w-0 flex-1 overflow-hidden">
          {rows.map((row, index) => (
            <TreeRow key={index} row={row} />
          ))}
        </ul>
        <div className="mr-0.5 flex w-[15px] shrink-0 flex-col items-center justify-between bg-[#eee] py-1">
          <Chevron dir="up" />
          <div className={clsx('w-full bg-[#cdcdcd]', thumb)} />
          <div className="flex-1" />
          <Chevron dir="down" />
        </div>
      </div>
      <div className="mr-0.5 flex h-4 shrink-0 items-center bg-[#eee] pr-5 pl-0.5">
        <Chevron dir="left" />
        <div className="ml-1 h-full w-[91px] bg-[#cdcdcd]" />
        <Chevron dir="right" className="ml-auto size-2.5 text-[#444]" />
      </div>
    </section>
  )
}

function LeftPanel() {
  return (
    <aside className="flex w-[243px] shrink-0 flex-col border-r border-l border-[#888] border-l-[#bbb] bg-[#f7f7f7] pt-[5px]">
      <ManagerPane rows={tree} className="flex-1" thumb="mt-[76px] h-[140px]" />
      <div className="mt-0.5 flex h-4 shrink-0 items-center justify-center border-y border-[#ccc]">
        <span className="size-1.5 rounded-full border border-[#aaa] bg-[#ddd]" />
      </div>
      <ManagerPane rows={lowerTree} className="mt-1 h-[163px] shrink-0" thumb="mt-0.5 h-[17px]" />
      <div className="mt-[5px] h-px shrink-0 bg-[#bbb]" />
    </aside>
  )
}

const hud = [
  { icon: 'zoomfit' },
  { icon: 'zoomarea' },
  { icon: 'prev' },
  { icon: 'cutview' },
  { icon: 'annot' },
  { icon: 'viewcube', caret: true },
  { icon: 'cube', caret: true },
  { icon: 'eye', caret: true },
  { icon: 'ballpen' },
  { icon: 'scene', caret: true },
  { icon: 'monitor', caret: true },
]

function Bolt({ x, y, dark }: { x: number; y: number; dark?: boolean }) {
  return (
    <g transform={`translate(${x} ${y})`} stroke="#000" strokeWidth="3">
      <path d="M-30-4v18l14 12 22 3 24-11V2z" fill="#3c3834" />
      <path d="M-30-4-12-17l28 1L30 2 8 13l-24-3z" fill={dark ? '#55504b' : '#e4e4e4'} />
      <path d="M-16 10v16M8 13v16" />
    </g>
  )
}

function Valve() {
  return (
    <svg
      viewBox="243 139 1228 834"
      role="img"
      aria-label="Valve assembly"
      className="absolute inset-0 size-full"
    >
      <defs>
        <linearGradient id="shade" x1="0" y1="0" x2="1" y2="1">
          <stop offset="0" stopColor="#636363" />
          <stop offset="1" stopColor="#909090" />
        </linearGradient>
        <linearGradient id="barrel" gradientUnits="userSpaceOnUse" x1="175" y1="900" x2="610" y2="960">
          <stop offset="0" stopColor="#4a4139" />
          <stop offset=".1" stopColor="#5a5149" />
          <stop offset=".2" stopColor="#6e655d" />
          <stop offset=".3" stopColor="#8a8178" />
          <stop offset=".4" stopColor="#7d746c" />
          <stop offset=".5" stopColor="#5f5750" />
          <stop offset=".62" stopColor="#75706a" />
          <stop offset=".76" stopColor="#463f39" />
          <stop offset="1" stopColor="#3a342f" />
        </linearGradient>
        <linearGradient id="barrelTop" gradientUnits="userSpaceOnUse" x1="480" y1="720" x2="370" y2="980">
          <stop offset="0" stopColor="#161310" stopOpacity=".8" />
          <stop offset=".5" stopColor="#161310" stopOpacity=".2" />
          <stop offset="1" stopColor="#161310" stopOpacity="0" />
        </linearGradient>
        <linearGradient id="edge">
          <stop offset="0" stopColor="#6e5a3c" />
          <stop offset=".06" stopColor="#4e4a46" />
          <stop offset=".2" stopColor="#26282c" />
          <stop offset=".3" stopColor="#77726c" />
          <stop offset=".55" stopColor="#3c3a38" />
          <stop offset=".7" stopColor="#8b8883" />
          <stop offset=".85" stopColor="#35322f" />
          <stop offset="1" stopColor="#6c6862" />
        </linearGradient>
        <linearGradient id="edge2">
          <stop offset="0" stopColor="#4d463f" />
          <stop offset=".3" stopColor="#6d645c" />
          <stop offset=".6" stopColor="#8a8279" />
          <stop offset="1" stopColor="#5c544c" />
        </linearGradient>
        <linearGradient id="plate" x1="0" y1="0" x2="1" y2=".3">
          <stop offset="0" stopColor="#c9c9cc" />
          <stop offset=".35" stopColor="#fdfdfd" />
          <stop offset=".7" stopColor="#f0f0f2" />
          <stop offset="1" stopColor="#b9b9bb" />
        </linearGradient>
        <linearGradient id="hexL" x1="0" y1="0" x2=".3" y2="1">
          <stop offset="0" stopColor="#5f5851" />
          <stop offset=".6" stopColor="#433d37" />
          <stop offset="1" stopColor="#29241f" />
        </linearGradient>
        <linearGradient id="hexR" x1="0" y1="0" x2="0" y2="1">
          <stop offset="0" stopColor="#635b54" />
          <stop offset="1" stopColor="#332e29" />
        </linearGradient>
        <linearGradient id="rim" x1="0" y1="0" x2="0" y2="1">
          <stop offset="0" stopColor="#303030" />
          <stop offset=".3" stopColor="#2c2c2c" />
          <stop offset=".75" stopColor="#383838" />
          <stop offset="1" stopColor="#1d1d1d" />
        </linearGradient>
        <linearGradient id="bore" x1="0" y1="0" x2=".6" y2="1">
          <stop offset="0" stopColor="#2a2724" />
          <stop offset="1" stopColor="#7d7b74" />
        </linearGradient>
        <filter id="soft" x="-10%" y="-10%" width="120%" height="120%">
          <feGaussianBlur stdDeviation="7" />
        </filter>
      </defs>

      {/* floor shadow */}
      <g transform="translate(760 720) scale(.333)">
        <path
          fillRule="evenodd"
          fill="url(#shade)"
          d="M85 160Q80 230 180 308C180 480 450 605 720 615C880 620 980 560 968 470C955 370 780 240 608 208Q500 125 385 100L378 60zM283 372Q350 405 505 411L438 484Q420 492 400 485C340 465 300 410 283 372zM497 515L568 436Q630 456 660 442L818 508Q830 515 820 525C770 565 620 560 520 535Q500 530 497 515zM687 315Q695 295 720 297C800 315 885 390 868 460Q862 482 835 478L660 408Q645 395 650 375Q688 345 687 315z"
        />
      </g>

      <g transform="translate(680 330) scale(.333)" stroke="#0b0b0b" strokeWidth="3">
        {/* base flange */}
        <ellipse cx="345" cy="1214" rx="278" ry="113" transform="rotate(11 345 1214)" fill="url(#edge2)" />
        <path d="M76 1140v32l538 90 3-32z" fill="url(#edge2)" stroke="none" />
        <ellipse cx="347" cy="1180" rx="277" ry="113" transform="rotate(11 347 1180)" fill="url(#plate)" />
        <ellipse cx="350" cy="1182" rx="215" ry="80" transform="rotate(11 350 1182)" fill="#6d655e" />
        {[[127, 1167], [303, 1269], [529, 1269], [570, 1167]].map(([x, y]) => (
          <ellipse key={x} cx={x} cy={y} rx="18" ry="10" fill="#3c3834" />
        ))}

        {/* barrel */}
        <path d="M232 680 159 1105Q150 1205 350 1246Q520 1268 550 1180L650 740z" fill="url(#barrel)" />
        <path d="M232 680 159 1105 552 1170 650 740z" fill="url(#barrelTop)" stroke="none" />

        {/* side branch */}
        <path d="M620 815Q500 850 462 915Q450 985 500 1035L600 1050z" fill="url(#hexL)" />
        <ellipse cx="624" cy="964" rx="104" ry="197" transform="rotate(26 624 964)" fill="#8b8279" />
        <path d="M524 1040Q500 990 520 910Q560 820 660 790L720 800 560 1140z" fill="#8b8279" stroke="none" />
        <ellipse cx="652" cy="972" rx="104" ry="197" transform="rotate(26 652 972)" fill="#4f463f" />
        <ellipse cx="656" cy="978" rx="47" ry="82" transform="rotate(24 656 978)" fill="url(#bore)" />
        {[[746, 849], [604, 900], [703, 1052], [561, 1107]].map(([x, y]) => (
          <ellipse key={x} cx={x} cy={y} rx="12" ry="19" transform={`rotate(24 ${x} ${y})`} fill="#6b625a" />
        ))}

        {/* bolt ends below the bonnet flange */}
        <path d="M198 640v60q15 12 30 0v-50zM372 740v22l14 10v28q13 6 27 0v-25l18-8v-20zM618 760v18q20 6 44-12v-20z" fill="#3b3733" />

        {/* bonnet flange */}
        <ellipse cx="464" cy="643" rx="280" ry="106" transform="rotate(11 464 643)" fill="url(#edge2)" />
        <path d="M190 520v70l545 115 13-80z" fill="url(#edge2)" stroke="none" />
        <ellipse cx="467" cy="610" rx="282" ry="105" transform="rotate(11 467 610)" fill="url(#edge)" />
        <path d="M190 525v35l555 105 3-40z" fill="url(#edge)" stroke="none" />
        <ellipse cx="469" cy="575" rx="284" ry="105" transform="rotate(11 469 575)" fill="url(#plate)" />
        <Bolt x={290} y={466} dark />
        <Bolt x={696} y={566} dark />

        {/* bonnet hex */}
        <path d="M330 520Q325 600 440 622Q590 645 640 560V500z" fill="#3a3531" />
        <path d="M355 330 328 470 332 535Q400 590 510 592Q600 600 645 525L662 400 640 360z" fill="url(#hexL)" />
        <path d="M525 432 662 420 645 525Q600 592 510 592z" fill="url(#hexR)" />
        <path d="M360 330Q362 370 385 395L525 432 655 418Q668 395 640 370L560 330z" fill="#dededf" />
        <path d="M385 395 360 400 332 530" fill="none" />
        <Bolt x={242} y={546} />
        <Bolt x={427} y={645} />
        <Bolt x={660} y={648} />

        {/* stem */}
        <path d="M465 345v28q45 26 88 6v-30z" fill="#1d1d1d" />
        <path d="M488 255h75v100q-40 14-75 0z" fill="#151515" />

        {/* handwheel */}
        <g fill="none">
          <path d="M240 116 490 190M590 226 860 306M720 128 560 206M390 290 530 222" stroke="#080808" strokeWidth="42" />
          <path d="M240 114 490 187M590 223 860 303M718 124 560 202M388 286 530 218" stroke="#303030" strokeWidth="34" />
          <path d="M250 112 480 178M600 218 850 292M700 126 590 178M400 276 520 216" stroke="#484848" strokeWidth="9" />
        </g>
        <g transform="translate(540 219) rotate(10.4)">
          <path
            fillRule="evenodd"
            fill="url(#rim)"
            d="M-391 0a391 152 0 1 0 782 0a391 152 0 1 0-782 0zM-302-16a314 98 0 1 0 628 0a314 98 0 1 0-628 0z"
          />
          <ellipse cx="10" cy="-14" rx="326" ry="106" fill="none" />
          <ellipse cx="8" cy="-13" rx="340" ry="115" fill="none" stroke="#050505" strokeWidth="4" />
          <ellipse cx="6" cy="-12" rx="348" ry="122" fill="none" stroke="#4a4a4a" />
          <path d="M-362 10A370 134 0 0 0 366 22" fill="none" stroke="#585858" strokeWidth="24" filter="url(#soft)" />
        </g>
        <path d="M466 195Q480 158 540 158Q605 162 622 205Q612 255 560 270Q495 265 466 215z" fill="#222" />
        <path d="M485 215Q500 205 520 222Q545 240 555 265M600 175Q585 210 600 235" stroke="#4a4a4a" fill="none" />
        <path d="M498 148v32q50 34 108 12v-38z" fill="#2f2d2b" />
        <path d="M498 150q50 32 108 8" fill="none" stroke="#8a8a86" />
        <path d="M515 112v52l38 12 44-10v-52z" fill="#47423d" />
        <path d="M515 112 538 101l44 2 15 14-42 12z" fill="#dcdcdc" />
        <path d="M545 108q16-4 26 3-12 8-26-3" fill="#777" />
        <path d="M555 129v46" />
      </g>

      <clipPath id="mark">
        <path d="M740 450h182v100H740z" />
      </clipPath>
      <g clipPath="url(#mark)" fill="#fff" opacity=".85">
        <text x="759" y="537" fontSize="62" fontFamily="Noto Sans CJK SC, sans-serif" fontWeight="300">
          网
        </text>
        <text x="826" y="538" fontSize="48" fontFamily="Liberation Serif, serif">
          www
        </text>
      </g>

      {/* triad */}
      <g strokeWidth="3" fontSize="8" fontFamily="Open Sans, sans-serif">
        <path d="M284 914 270 908" stroke="#e04040" />
        <path d="m262 905 10-2-3 9z" fill="#c81414" />
        <path d="M284 914l12-3" stroke="#2424c0" />
        <path d="m304 910-9-4 2 9z" fill="#101090" />
        <path d="m285 914 2-18" stroke="#7fd48a" />
        <path d="m288 888-5 8h9z" fill="#0d6b1c" />
        <circle cx="284" cy="914" r="2" fill="#222" />
        <text x="256" y="901" fill="#d33">X</text>
        <text x="288" y="882" fill="#386">Y</text>
        <text x="306" y="908" fill="#33a">Z</text>
      </g>
    </svg>
  )
}

const paneTabs = ['home', 'books', 'folder', 'palette', 'ball', 'list']

function Viewport() {
  return (
    <main className="relative min-w-0 flex-1 bg-white">
      <Valve />
      <div className="absolute inset-x-0 -top-[17px] grid h-5 grid-cols-[1fr_auto_1fr] items-center">
        <div className="col-start-2 flex items-center gap-1.5 pr-0.5 opacity-90">
          {hud.map((item) => (
            <button key={item.icon} type="button" aria-label={item.icon} className="flex items-center gap-2">
              <Icon name={item.icon} />
              {item.caret && <Caret className="text-[#999]" />}
            </button>
          ))}
        </div>
        <div className="flex items-center justify-end gap-2.5 pr-2.5 text-[#888]">
          <button type="button" aria-label="Previous window">
            <svg viewBox="0 0 16 16" className="size-4" aria-hidden="true">
              <path d="M2.500 1.500h11v13h-11z" fill="none" stroke="currentColor" />
              <path d="M10 5v6L6 8z" fill="currentColor" />
            </svg>
          </button>
          <button type="button" aria-label="Next window">
            <svg viewBox="0 0 16 16" className="size-4" aria-hidden="true">
              <path d="M2.500 1.500h11v13h-11z" fill="none" stroke="currentColor" />
              <path d="M7 5v6l4-3z" fill="currentColor" />
            </svg>
          </button>
          <button type="button" aria-label="Minimize document" className="flex size-4 items-end justify-center pb-px">
            <span className="h-0.5 w-2.5 bg-[#888]" />
          </button>
          <button type="button" aria-label="Restore document">
            <Restore />
          </button>
          <button type="button" aria-label="Close document" className="w-4 text-[14px] leading-4">
            ✕
          </button>
        </div>
      </div>
      <button
        type="button"
        aria-label="Collapse panel"
        className="absolute top-[386px] left-0 flex h-[38px] w-2 items-center justify-center border border-l-0 border-[#888] bg-[#f7f7f7]"
      >
        <span className="size-1.5 rounded-full border border-[#aaa]" />
      </button>
      <div className="absolute top-[52px] right-0 w-[26px] border-t border-l border-[#888]">
        {paneTabs.map((tab) => (
          <button
            key={tab}
            type="button"
            aria-label={tab}
            className={clsx(
              'flex h-6 w-full items-center justify-center border-b border-[#888]',
              tab === 'books' ? 'bg-[#f7f7f7]' : 'bg-[#d2d2d2]',
            )}
          >
            <Icon name={tab} className="size-[18px]" />
          </button>
        ))}
      </div>
    </main>
  )
}

const docTabs = ['Model', '3D Views', 'Motion Study 1']

function DocumentTabs() {
  const [active, setActive] = useState('Model')
  return (
    <div className="flex h-[15px] shrink-0 border-t border-[#777] bg-[#f7f7f7] pl-[27px]">
      <div className="flex">
        {['|◂', '◂', '▸', '▸|'].map((glyph) => (
          <button
            key={glyph}
            type="button"
            disabled
            className="w-4 border-r border-[#ccc] bg-[#a5a5a5] text-center text-[9px] leading-[14px] text-[#808080]"
          >
            {glyph}
          </button>
        ))}
      </div>
      <div role="tablist" className="flex">
        {docTabs.map((tab) => (
          <button
            key={tab}
            type="button"
            role="tab"
            aria-selected={tab === active}
            onClick={() => setActive(tab)}
            className={clsx(
              'border-r border-[#888] pb-1 leading-3 last:pr-5',
              tab === active ? 'px-3 font-bold text-black' : 'border-b bg-[#d2d2d2] px-[11px] text-[#222]',
            )}
          >
            {tab}
          </button>
        ))}
      </div>
    </div>
  )
}

type LibraryRow = { label: string; icon: string; level: 0 | 1 | 2; open?: boolean }

const library: LibraryRow[] = [
  { label: 'IS', icon: 'india', level: 0, open: false },
  { label: 'ISO', icon: 'iso', level: 0, open: true },
  { label: 'Bearings', icon: 'bearing', level: 1, open: false },
  { label: 'Bolts and Screws', icon: 'screw', level: 1, open: false },
  { label: 'Keys', icon: 'key', level: 1, open: false },
  { label: 'Nuts', icon: 'nut', level: 1, open: true },
  { label: 'Hex Nuts', icon: 'nut', level: 2 },
  { label: 'Hex Nuts - Fine Pitch', icon: 'nut', level: 2 },
  { label: 'Hex Nuts - Prevailing Torque', icon: 'nut', level: 2 },
  { label: 'Hex Nuts - Prevailing Torque - Fine Pitch', icon: 'nut', level: 2 },
  { label: 'Hex Nuts - Structural', icon: 'nut', level: 2 },
]

const libraryIndent = ['pl-[33px]', 'pl-14', 'pl-[79px]']

function LibraryTree() {
  const [selected, setSelected] = useState('Hex Nuts')
  return (
    <div className="flex h-[252px] shrink-0 border-t border-[#bbb]">
      <ul className="flex-1 overflow-hidden pt-2">
        {library.map((row) => (
          <li key={row.label} className={clsx('flex h-[22px] items-center', libraryIndent[row.level])}>
            <span className="flex w-[17px] shrink-0">
              {row.open !== undefined && (
                <Chevron
                  dir={row.open ? 'down' : 'right'}
                  className={clsx('size-2.5', row.open ? 'text-[#444]' : 'text-[#999]')}
                />
              )}
            </span>
            <button
              type="button"
              onClick={() => setSelected(row.label)}
              className={clsx('flex h-full items-center gap-[5px] px-0.5 pr-1', selected === row.label && 'bg-[#cde3f8]')}
            >
              <Icon name={row.icon} />
              {row.label}
            </button>
          </li>
        ))}
        <li className="flex pl-[74px]">
          <Icon name="bearing" />
        </li>
      </ul>
      <div className="w-1 shrink-0 bg-[#eee] pt-[89px]">
        <div className="h-[60px] bg-[#cdcdcd]" />
      </div>
    </div>
  )
}

function NutThumb({ kind, selected }: { kind: 'flange' | 'style' | 'thin'; selected?: boolean }) {
  const dark = selected ? '#12324c' : '#131110'
  const mid = selected ? '#2d618a' : '#4b4541'
  const light = selected ? '#4d7fa6' : '#857c76'
  const side = selected ? '#1d4a70' : '#2f2b28'
  return (
    <svg viewBox="0 0 34 54" className="mx-auto h-[54px] w-[34px]" aria-hidden="true">
      {selected ? (
        <path d="M2 41h30v13H1z" fill="#a9d0f2" />
      ) : (
        <path d="M4 46q12-6 24 0l-3 5H8z" fill="#dedede" />
      )}
      {kind === 'flange' && (
        <>
          <ellipse cx="21" cy="20" rx="10" ry="19" fill="#2b2827" transform="rotate(-14 21 20)" />
          <path d="M10 8q0-7 7-7 4 1 5 7l-5 5z" fill="#5d5854" />
          <path d="M22 4q9 12 7 30" fill="none" stroke="#77716c" strokeWidth="1.500" />
        </>
      )}
      <g transform={kind === 'flange' ? 'translate(2 7) scale(.78)' : undefined}>
        <path d="M2 17 8 5l9-4 12 6 3 7v14l-8 10-9 5-9-4-4-10z" fill={mid} />
        <path d="m8 5 9-4 12 6-8 10-10-2z" fill={light} />
        <path d="m32 14-11 9 0 17 11-12z" fill={side} />
        <path d="m29 7 3 7-11 9-2-7z" fill={mid} />
        <path d="M2 17 9 8l8 3 5 12-1 14-7 7-8-4-4-10z" fill={dark} />
        <ellipse
          cx="12"
          cy="26"
          rx={kind === 'thin' ? 7 : 6}
          ry="11"
          transform="rotate(-12 12 26)"
          fill={selected ? '#7fa9c9' : '#a59f9a'}
        />
        <path d="M7 20q2-5 5-4l4 20q-3 1-5-1z" fill={selected ? '#245a84' : '#4c4744'} opacity=".8" />
      </g>
    </svg>
  )
}

const parts = [
  { name: 'Hex Flange Nut\nGrade A ISO - 4161', kind: 'flange' as const },
  { name: 'Hex Nut Grade C\nISO - 4034', kind: 'style' as const },
  { name: 'Hex Nut Style 1 ISO\n- 4032', kind: 'style' as const },
  { name: 'Hex Nut Style 2 ISO\n- 4033', kind: 'style' as const },
  { name: 'Hex Thin Nut\nGrade AB IS...', kind: 'thin' as const },
  { name: 'Hex Thin Nut\nGrade B ISO - 4036', kind: 'thin' as const },
]

function Splitter({ grip }: { grip?: boolean }) {
  return (
    <div className="flex h-1.5 shrink-0 justify-center border-t-2 border-b-2 border-t-[#8d92a5] border-b-[#5e637a] bg-[#c5c8d3]">
      {grip && (
        <svg viewBox="0 0 22 4" className="h-1 w-[22px]" aria-hidden="true">
          <path d="m0 4 3-4 3 4zM8 4l3-4 3 4zM16 4l3-4 3 4z" fill="#111" />
        </svg>
      )}
    </div>
  )
}

const libraryTools = ['booksAdd', 'booksOff', 'folderOff', 'refresh', 'up', 'bolt']

function DesignLibrary() {
  return (
    <aside className="flex w-[439px] shrink-0 flex-col bg-[#f7f7f7]">
      <div className="flex min-h-0 flex-1 flex-col border-l border-[#888]">
        <div className="flex h-[22px] shrink-0 items-center border-b border-[#222] bg-[#acacae] pl-1.5">
          <button type="button" aria-label="Collapse pane" className="flex">
            <Chevron dir="right" className="size-2.5 text-black" />
            <Chevron dir="right" className="-ml-1 size-2.5 text-black" />
          </button>
          <h2 className="flex-1 text-center font-bold">Design Library</h2>
          <Icon name="gear" className="size-4" />
          <span className="ml-1.5 w-2 overflow-hidden text-[#222]">
            <Icon name="pin" className="size-3" />
          </span>
        </div>
        <div className="flex h-8 shrink-0 items-center gap-[7px] pl-2">
          <button type="button" aria-label="Back">
            <Icon name="back" />
          </button>
          <button type="button" aria-label="Forward">
            <Icon name="fwd" />
          </button>
          <button type="button" aria-label="Recent folders" className="mr-px ml-0.5">
            <Caret />
          </button>
          {libraryTools.map((tool) => (
            <button key={tool} type="button" aria-label={tool}>
              <Icon name={tool} />
            </button>
          ))}
        </div>
        <LibraryTree />
        <div className="ml-1">
          <Splitter />
          <div className="mt-1.5 mb-1.5 ml-1 border border-r-0 border-black bg-[#ffff80] pt-0.5 pr-2 pl-3.5 text-center leading-[15px]">
            <p>
              Toolbox is currently installed on this computer. While that is acceptable for a single user
              environment, it is not the recommended setup for a multiple user environment.
            </p>
            <a
              href="#toolbox"
              className="mt-[18px] block font-['Liberation_Sans',sans-serif] text-[16px] leading-[22px] font-bold italic underline"
            >
              Learn More
            </a>
          </div>
          <Splitter grip />
        </div>
        <ul className="grid grid-cols-[repeat(4,107px)] gap-y-[5px] pt-3 pl-[5px]">
          {parts.map((part) => {
            const selected = part.name.includes('Style 1')
            return (
              <li key={part.name} className="h-[102px]">
                <button type="button" className="w-full">
                  <NutThumb kind={part.kind} selected={selected} />
                  <span
                    className={clsx(
                      'mt-1 block leading-[15px] whitespace-pre-line',
                      selected && 'bg-[#f0f0f0]',
                    )}
                  >
                    {part.name}
                  </span>
                </button>
              </li>
            )
          })}
        </ul>
      </div>
    </aside>
  )
}

// Glyphs of the selection filters; each gets the small funnel on top.
const filters: { label: string; art: ReactNode }[] = [
  { label: 'Vertices', art: <circle cx="6" cy="6" r="2.500" fill={B} stroke={D} /> },
  { label: 'Edges', art: <path d="M7 1v18" stroke={B} strokeWidth="2" /> },
  { label: 'Faces', art: <path d="M2 2h14v13H2z" fill={B} stroke={D} /> },
  { label: 'Surface bodies', art: <path d="m1 9 5-5 5 2 4-3 4 4-5 5-5-1-4 4z" fill={B} stroke={D} /> },
  { label: 'Solid bodies', art: <path d="m2 5 7-3 8 2v10l-7 4-8-3zM2 5l8 2 7-3M10 7v11" fill={B} stroke={D} /> },
  { label: 'Axes', art: <path d="M1 17 17 2" stroke={K} strokeDasharray="5 2" strokeWidth="1.500" /> },
  { label: 'Planes', art: <path d="M2 6 13 2v12L2 18zM8 1v18" fill="#8ab8cd" stroke={D} /> },
  { label: 'Sketch points', art: <path d="M5 4h5v5H5z" fill={L} stroke={D} strokeWidth="1.300" /> },
  { label: 'Sketches', art: <path d="M17 2H3v12q0 3 4 3h6" stroke={D} strokeWidth="1.800" fill="none" /> },
  { label: 'Sketch segments', art: <path d="M3 18V4h14M1.500 2.500h3v3h-3zM16 2.500h3v3h-3z" stroke={K} strokeWidth="1.400" fill="none" /> },
  { label: 'Midpoints', art: <path d="M1 17 18 2M8 8h4v4H8z" stroke={D} strokeWidth="1.600" fill="#fff" /> },
  {
    label: 'Center marks',
    art: (
      <>
        <circle cx="10" cy="10" r="5.500" stroke={D} strokeWidth="1.800" />
        <path d="M10 1v5M10 14v5M1 10h5M14 10h5M9 9h2v2H9z" stroke={D} strokeWidth="1.800" />
      </>
    ),
  },
  { label: 'Centerlines', art: <path d="M2 2h5v16H2zM7 5h10v9H7M0 10h20" stroke={K} strokeDasharray="8 1" strokeWidth="1.300" /> },
  { label: 'Dimensions', art: <path d="m2 9 8-7 6 6-8 7zM5 9l5 4M1 12V7h5" stroke={D} strokeWidth="1.800" /> },
  { label: 'Surface finish', art: <path d="m1 9 4 9L12 2h7M3 9h7" stroke={K} strokeWidth="1.700" /> },
  { label: 'Geometric tolerances', art: <path d="M0 3h20v9H0zM10 3v9M3 9q2-4 4 0zM13 6v4M17 5v5" stroke={K} strokeWidth="1.400" /> },
  {
    label: 'Notes',
    art: (
      <>
        <circle cx="12" cy="7.500" r="6" stroke={K} strokeWidth="1.200" />
        <path d="M9.500 10.500v-6l5 6v-6M8 11l-6 8" stroke={K} strokeWidth="1.400" />
      </>
    ),
  },
  { label: 'Datum features', art: <path d="M3 1h13v12H3zM6 11l3.500-8 3.500 8M7.500 8h4M9.500 13v4M6 18h7l-3.500-3z" stroke={K} strokeWidth="1.500" /> },
  { label: 'Weld symbols', art: <path d="m1 14 5-9h4l-1 5 5-5-1 5 5-5M4 9h12" stroke={K} strokeWidth="1.600" /> },
  { label: 'Weld beads', art: <path d="M3 1v8h9zM3 12q2 4 0 7M7 12q2 4 0 7M11 12q2 4 0 7" stroke={K} strokeWidth="1.300" /> },
  {
    label: 'Datum targets',
    art: (
      <>
        <circle cx="11" cy="8" r="6.500" stroke={K} strokeWidth="1.200" />
        <path d="M4 8h14M9 13l2-5 2 5M6 12l-5 6" stroke={K} strokeWidth="1.300" />
      </>
    ),
  },
  { label: 'Cosmetic threads', art: <path d="M5 2h9v11H5zM2 1v13h15V1M7 15l3 3 3-3" stroke={K} strokeWidth="1.200" strokeDasharray="4 1" fill="#e4e4e4" /> },
  {
    label: 'Blocks',
    art: (
      <>
        <path d="M2 2h15v14H2zM6 14l3.500-9 3.500 9M7.500 11h4" stroke={K} strokeWidth="1.400" />
        <circle cx="14" cy="5" r="1.500" stroke={K} />
      </>
    ),
  },
  {
    label: 'Center of mass',
    art: (
      <>
        <circle cx="10" cy="9" r="7.500" fill="#fff" stroke={K} strokeWidth="1.200" />
        <path d="M10 9V1.500a7.500 7.500 0 0 1 7.500 7.500zM10 9v7.500A7.500 7.500 0 0 1 2.500 9z" fill="#222" />
      </>
    ),
  },
  { label: 'Connection points', art: <path d="M0 7h11M11 3h7v8h-7z" fill="#49a6c2" stroke={K} strokeWidth="1.500" /> },
  { label: 'Routing points', art: <path d="M0 7h19M6 3h7v8H6z" fill="#49a6c2" stroke={K} strokeWidth="1.500" /> },
  { label: 'Mesh faces', art: <path d="M1 2h16v13H1zM9 12l7-9 3 8zM14 6v6" fill="#7fc0dc" stroke={K} strokeWidth="1.300" /> },
  { label: 'Mesh edges', art: <path d="M3 1v18M8 12l6-9 4 8zM13 5v7" stroke={K} strokeWidth="1.500" fill="#ddd" /> },
  { label: 'Mesh vertices', art: <path d="M2 4h4v4H2zM8 12l6-9 4 8zM13 5v7" stroke={K} strokeWidth="1.300" fill="#9cc" /> },
]

function FilterBar() {
  return (
    <div role="toolbar" aria-label="Selection filter" className="flex h-[33px] shrink-0 bg-[#f7f7f7]">
      <div className="flex h-full items-center border-r border-[#777] pr-2 pl-1">
        <span className="h-6 border-l-2 border-dotted border-[#999]" />
        <button type="button" aria-label="Toggle selection filters" disabled className="ml-3 flex w-[18px] justify-center">
          <svg viewBox="0 0 20 20" className="size-4" aria-hidden="true">
            <path d="M3 3h14l-5 6v8l-4-2V9z" fill="#eee" stroke={G} strokeWidth="1.500" />
          </svg>
        </button>
        <button type="button" aria-label="Clear all filters" disabled className="ml-2 flex w-5 justify-center">
          <svg viewBox="0 0 20 20" className="size-5" aria-hidden="true">
            <path d="M1 1h12l-4 5H5zM4 5h12l-4 5H8zM7 9h12l-4 4v6l-3-2v-4z" fill="#eee" stroke={G} strokeWidth="1.300" />
          </svg>
        </button>
        <button type="button" aria-label="Select all filters" className="ml-[7px] flex w-5 justify-center">
          <svg viewBox="0 0 20 20" className="size-5" aria-hidden="true">
            <path d="M1 1h12l-4 5H5zM4 5h12l-4 5H8zM7 9h12l-4 4v6l-3-2v-4z" fill="#c07ad0" stroke="#5c2070" strokeWidth="1.300" />
          </svg>
        </button>
        <button type="button" aria-label="Select" className="ml-[3px] flex h-[26px] border border-[#999]">
          <span className="flex h-full w-[27px] items-center justify-center bg-[#b5b5b5]">
            <Icon name="pointer" className="size-[18px]" />
          </span>
          <span className="flex h-full w-3 items-center justify-center">
            <Caret />
          </span>
        </button>
        <span className="ml-1 flex">
          <Icon name="pointerOff" />
        </span>
        <span className="mr-[5px] ml-1.5 h-5 w-px bg-[#999]" />
        {filters.map((filter) => (
          <button key={filter.label} type="button" aria-label={filter.label} className="flex w-[27px] justify-center">
            <svg viewBox="0 0 20 20" fill="none" className="size-[18px]" aria-hidden="true">
              {filter.art}
              <path d="M12 12h8l-3 3v5h-2v-5z" fill="#9a4fb5" />
            </svg>
          </button>
        ))}
      </div>
    </div>
  )
}

function StatusBar() {
  return (
    <footer className="flex h-[11px] shrink-0 overflow-hidden border-t border-[#777] bg-[#f7f7f7] leading-4 whitespace-nowrap">
      <span className="pl-px">SOLIDWORKS Premium 2022 SP5.0</span>
      <span className="ml-auto">Under Defined</span>
      <span className="ml-[18px]">Editing Assembly</span>
      <span className="ml-[122px]">MMGS</span>
      <span className="ml-5 w-3.5">▴</span>
      <span className="ml-5 w-2">(</span>
    </footer>
  )
}

export default function App() {
  return (
    <div className="flex h-screen flex-col overflow-hidden bg-[#f7f7f7] font-['Noto_Sans','Open_Sans',sans-serif] text-[11px] text-[#111]">
      <svg className="absolute size-0" aria-hidden="true">
        <defs>
          <linearGradient id="rainbow" x1="1" y1="0" x2="0" y2="1">
            <stop offset="0" stopColor="#f01e1e" />
            <stop offset=".15" stopColor="#f5e616" />
            <stop offset=".35" stopColor="#20d860" />
            <stop offset=".55" stopColor="#18b4f0" />
            <stop offset=".75" stopColor="#6c2ee8" />
            <stop offset="1" stopColor="#e81ecb" />
          </linearGradient>
          <linearGradient id="rainbow2">
            <stop offset="0" stopColor="#1740d0" />
            <stop offset=".5" stopColor="#3dbb4a" />
            <stop offset=".8" stopColor="#f0d820" />
            <stop offset="1" stopColor="#e04818" />
          </linearGradient>
        </defs>
      </svg>
      <TitleBar />
      <Ribbon />
      <div className="flex min-h-0 flex-1">
        <div className="flex min-w-0 flex-1 flex-col">
          <CommandTabs />
          <div className="flex min-h-0 flex-1">
            <LeftPanel />
            <Viewport />
          </div>
          <DocumentTabs />
        </div>
        <DesignLibrary />
      </div>
      <FilterBar />
      <StatusBar />
    </div>
  )
}
